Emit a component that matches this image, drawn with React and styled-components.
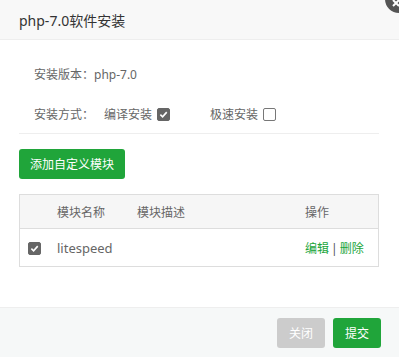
import React, { useState } from 'react';
import styled, { createGlobalStyle } from 'styled-components';

const GlobalStyle = createGlobalStyle`
  html, body {
    margin: 0;
    padding: 0;
    background: #fff;
  }
  body {
    font-family: "Noto Sans", "Noto Sans CJK SC", sans-serif;
    font-size: 12px;
    color: #555;
  }
`;

const Dialog = styled.div`
  position: relative;
  width: 399px;
  height: 357px;
  display: flex;
  flex-direction: column;
  background: #fff;
  overflow: hidden;
`;

const Header = styled.div`
  height: 40px;
  box-sizing: border-box;
  border-bottom: 1px solid #eee;
  background: #f8f8f8;
  padding-left: 19px;
  display: flex;
  align-items: center;
  font-size: 14px;
  color: #333;
`;

const CloseBtn = styled.span`
  position: absolute;
  top: -15px;
  right: -14px;
  width: 28px;
  height: 28px;
  border-radius: 50%;
  background: #555;
  display: flex;
  align-items: center;
  justify-content: center;
`;

const Body = styled.div`
  flex: 1;
  padding: 0 20px 0 19px;
`;

const Line = styled.div`
  display: flex;
  align-items: center;
  height: 20px;
  padding-left: 15px;
  margin-top: ${(p) => p.top}px;
  color: #666;
`;

const Label = styled.span`
  width: 70px;
`;

const Option = styled.label`
  display: inline-flex;
  align-items: center;
  gap: 5px;
  margin-right: ${(p) => p.gap || 0}px;
`;

const Box = styled.span`
  width: 13px;
  height: 13px;
  box-sizing: border-box;
  border-radius: 2px;
  display: inline-flex;
  align-items: center;
  justify-content: center;
  background: ${(p) => (p.checked ? '#666' : '#fff')};
  border: 1px solid ${(p) => (p.checked ? '#666' : '#777')};
`;

const Divider = styled.div`
  height: 1px;
  background: #eee;
  margin-top: 9px;
`;

const GreenButton = styled.button`
  margin-top: 15px;
  height: 30px;
  padding: 0 11px;
  border: none;
  border-radius: 3px;
  background: #20a53a;
  color: #fff;
  font-family: inherit;
  font-size: 12px;
`;

const Table = styled.table`
  margin-top: 15px;
  width: 100%;
  border-collapse: collapse;
  border: 1px solid #ddd;
  font-size: 12px;
`;

const Th = styled.th`
  height: 33px;
  padding: 0;
  text-align: left;
  font-weight: normal;
  color: #666;
  background: #f6f6f6;
  border-bottom: 1px solid #ddd;
  width: ${(p) => p.w || 'auto'};
`;

const Td = styled.td`
  height: 37px;
  padding: 0 0 0 ${(p) => p.indent || 0}px;
  color: #666;
  font-size: 13px;
`;

const Links = styled.span`
  color: #20a53a;
  font-size: 12px;
  a {
    color: #20a53a;
    text-decoration: none;
  }
  i {
    font-style: normal;
    color: #555;
    margin: 0 2px;
  }
`;

const Footer = styled.div`
  height: 50px;
  box-sizing: border-box;
  border-top: 1px solid #eee;
  background: #f6f8f8;
  display: flex;
  justify-content: flex-end;
  align-items: center;
  gap: 8px;
  padding: 0 18px 0 0;
`;

const FootButton = styled.button`
  width: 48px;
  height: 30px;
  border: none;
  border-radius: 3px;
  font-family: inherit;
  font-size: 12px;
  color: #fff;
  background: ${(p) => (p.primary ? '#20a53a' : '#ccc')};
  margin-top: 1px;
`;

const Tick = () => (
  <svg width="9" height="9" viewBox="0 0 10 10">
    <path d="M1.5 5.2 L4 7.6 L8.6 2.4" fill="none" stroke="#fff" strokeWidth="1.8" />
  </svg>
);

const Check = ({ checked }) => <Box checked={checked}>{checked && <Tick />}</Box>;

export default function App() {
  const [mode] = useState('compile');
  return (
    <>
      <GlobalStyle />
      <Dialog>
        <Header>php-7.0软件安装</Header>
        <CloseBtn>
          <svg width="10" height="10" viewBox="0 0 10 10" style={{ marginLeft: -6, marginTop: 8 }}>
            <path d="M2 2 L8 8 M8 2 L2 8" stroke="#fff" strokeWidth="2" />
          </svg>
        </CloseBtn>
        <Body>
          <Line top={24}>安装版本：php-7.0</Line>
          <Line top={20}>
            <Label>安装方式：</Label>
            <Option gap={40}>
              编译安装 <Check checked={mode === 'compile'} />
            </Option>
            <Option>
              极速安装 <Check checked={mode === 'fast'} />
            </Option>
          </Line>
          <Divider />
          <GreenButton>添加自定义模块</GreenButton>
          <Table>
            <thead>
              <tr>
                <Th w="37px"></Th>
                <Th w="80px">模块名称</Th>
                <Th>模块描述</Th>
                <Th w="73px">操作</Th>
              </tr>
            </thead>
            <tbody>
              <tr>
                <Td indent={8}>
                  <Check checked />
                </Td>
                <Td>litespeed</Td>
                <Td></Td>
                <Td>
                  <Links>
                    <a href="#">编辑</a>
                    <i>|</i>
                    <a href="#">删除</a>
                  </Links>
                </Td>
              </tr>
            </tbody>
          </Table>
        </Body>
        <Footer>
          <FootButton>关闭</FootButton>
          <FootButton primary>提交</FootButton>
        </Footer>
      </Dialog>
    </>
  );
}
